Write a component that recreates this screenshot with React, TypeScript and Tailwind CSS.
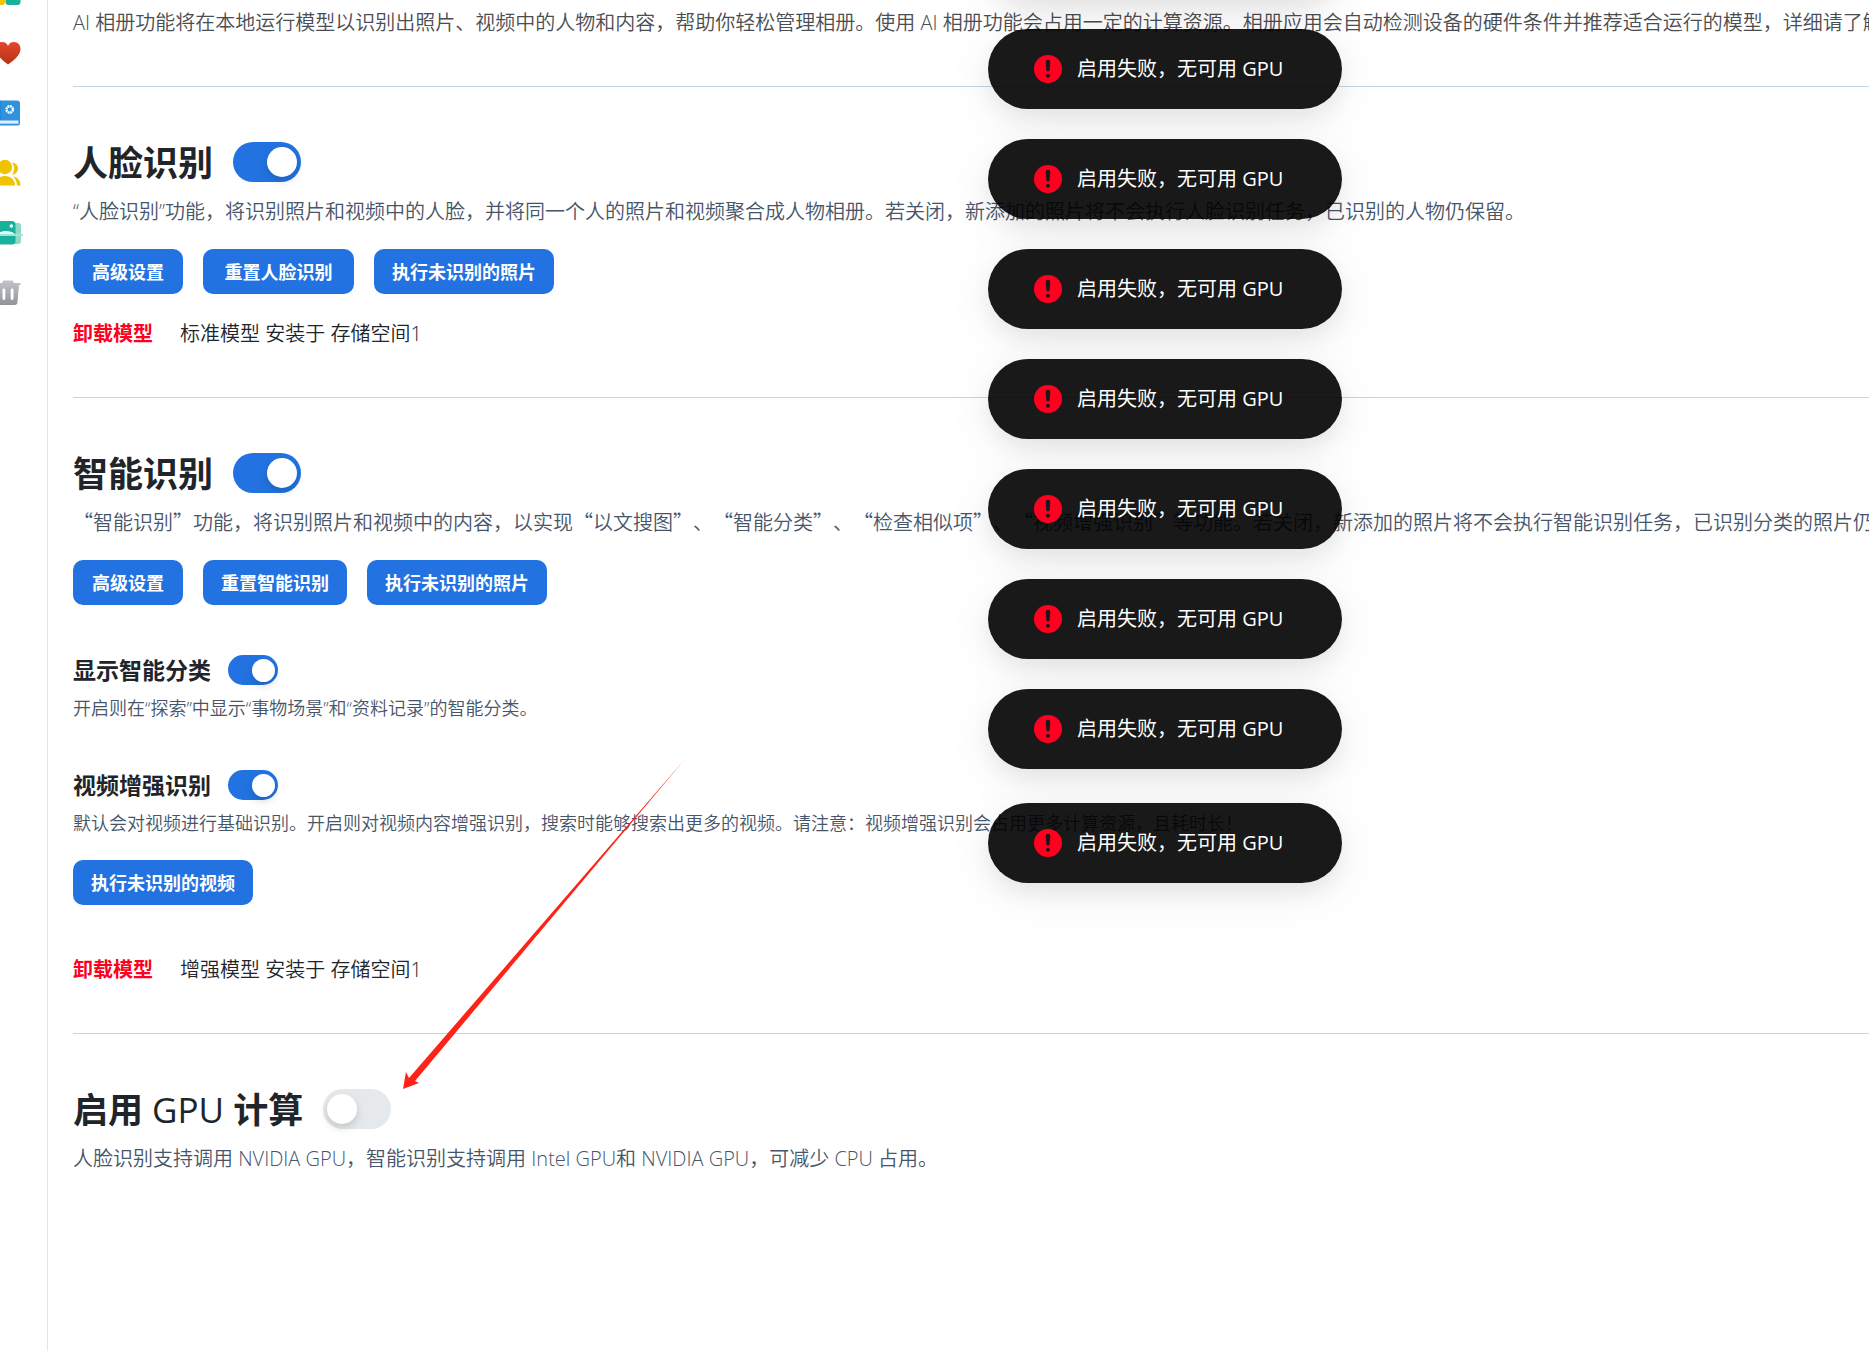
import { useState, type ReactNode } from "react";

const TOASTS = [1, 2, 3, 4, 5, 6, 7, 8];

function HeartIcon() {
  return (
    <svg viewBox="0 0 24 30" className="h-[30px] w-6">
      <defs>
        <linearGradient id="heart" x1="0" y1="0" x2="0" y2="1">
          <stop offset="0" stopColor="#e2482b" />
          <stop offset="1" stopColor="#b93218" />
        </linearGradient>
      </defs>
      <path
        d="M-4 10C-4 6-1 4 2 4c3 0 5 1.500 6 4 1-2.500 3-4 6-4 4 0 6.500 3 6.500 7 0 6-6 11-12.500 15.500C2 22-4 17-4 10z"
        fill="url(#heart)"
      />
    </svg>
  );
}

function AlbumIcon() {
  return (
    <svg viewBox="0 0 24 30" className="h-[30px] w-6">
      <path d="M-4 2.500h21a3 3 0 0 1 3 3V25a2.500 2.500 0 0 1-2.500 2.500H-4z" fill="#2e93dc" />
      <path d="M-4 2.500h4.500v20H-4z" fill="#1c7acb" />
      <path d="M-4 22.500h22.500v3.200H-4z" fill="#e3ecff" />
      <circle cx="9.700" cy="11.500" r="3.200" fill="none" stroke="#fff" strokeWidth="2.400" strokeDasharray="1.900 .6" />
    </svg>
  );
}

function PeopleIcon() {
  return (
    <svg viewBox="0 0 24 30" className="h-[30px] w-6" fill="#efc300">
      <circle cx="5" cy="9" r="7.200" />
      <path d="M-6 27.500c0-6 5-9.500 11-9.500s10 4 10 9.500z" />
      <path d="M12 4.500c3.500.2 6 2.800 6 6s-2.500 6-6 6.300c2.800-3.500 2.800-8.800 0-12.300z" />
      <path d="M13 18.500c4.500.5 7.500 4 7.500 9h-3.500c-.2-3.800-1.500-6.700-4-9z" />
    </svg>
  );
}

function ScanIcon() {
  return (
    <svg viewBox="0 0 24 30" className="h-[30px] w-6">
      <path d="M10 5h8a3 3 0 0 1 3 3v15a3 3 0 0 1-3 3h-8z" fill="#8fd8ca" />
      <path d="M-4 3h16a3.500 3.500 0 0 1 3.500 3.500v16.500a3.500 3.500 0 0 1-3.500 3.500H-4z" fill="#17b29c" />
      <circle cx="11.300" cy="8" r="1.800" fill="#fff" />
      <path d="M-2 16c3-4 13-4 17 0z" fill="#e8faf6" />
      <path d="M-4 16h27v2H-4z" fill="#a6e2d7" />
    </svg>
  );
}

function TrashIcon() {
  return (
    <svg viewBox="0 0 24 30" className="h-[30px] w-6">
      <defs>
        <linearGradient id="trash" x1="0" y1="0" x2="0" y2="1">
          <stop offset="0" stopColor="#c3c5cb" />
          <stop offset="1" stopColor="#929399" />
        </linearGradient>
      </defs>
      <path
        d="M2 4.500 3.500 2.500h9l1.500 2.500h6.500v2h-1.500l-1.500 17a3 3 0 0 1-3 3H-4V5h6zM2.500 12v8.500a1.400 1.400 0 0 0 2.800 0V12a1.400 1.400 0 0 0-2.800 0zm8.200 0v8.500a1.400 1.400 0 0 0 2.800 0V12a1.400 1.400 0 0 0-2.800 0z"
        fillRule="evenodd"
        fill="url(#trash)"
      />
    </svg>
  );
}

const NAV = [
  { label: "收藏", icon: <HeartIcon /> },
  { label: "相册", icon: <AlbumIcon /> },
  { label: "人物", icon: <PeopleIcon /> },
  { label: "扫描", icon: <ScanIcon /> },
  { label: "回收站", icon: <TrashIcon /> },
];

function Sidebar() {
  return (
    <nav className="flex w-12 shrink-0 flex-col overflow-hidden border-r border-[#e3e4ec]">
      <a href="#explore" aria-label="探索" className="block h-[23px]">
        <svg viewBox="0 0 24 23" className="h-[23px] w-6">
          <path d="M-4-6h9v8a3 3 0 0 1-3 3h-6z" fill="#efc300" />
          <path d="M5.500-6h15v8a3 3 0 0 1-3 3h-9a3 3 0 0 1-3-3z" fill="#17b29c" />
        </svg>
      </a>
      {NAV.map((item) => (
        <a key={item.label} href="#album" aria-label={item.label} className="flex h-[60px] items-center">
          {item.icon}
        </a>
      ))}
    </nav>
  );
}

function Toggle({ label, small = false, on = true }: { label: string; small?: boolean; on?: boolean }) {
  const [checked, setChecked] = useState(on);
  const size = small
    ? "h-[30px] w-[50px] before:size-[23px] checked:before:translate-x-5"
    : "h-10 w-[68px] before:size-[30px] checked:before:translate-x-[30px]";

  return (
    <input
      type="checkbox"
      role="switch"
      aria-label={label}
      checked={checked}
      onChange={() => setChecked(!checked)}
      className={`flex shrink-0 cursor-pointer appearance-none items-center rounded-full bg-[#e5e9eb] px-1 before:rounded-full before:bg-white before:shadow-[0_4px_8px_rgba(0,0,0,0.15)] before:content-[''] checked:bg-[#2273e1] ${size}`}
    />
  );
}

function Button({ children, wide = false }: { children: ReactNode; wide?: boolean }) {
  return (
    <button
      className={`h-[45px] rounded-[10px] bg-[#2273e1] px-[18px] text-lg font-bold text-white ${wide ? "min-w-[151px]" : "min-w-[110px]"}`}
    >
      {children}
    </button>
  );
}

function Title({ children }: { children: ReactNode }) {
  return <h2 className="h-10 text-[35px] leading-[42px] font-bold text-[#212529]">{children}</h2>;
}

function SubTitle({ children }: { children: ReactNode }) {
  return <h3 className="text-[23px] leading-[30px] font-bold text-[#212529]">{children}</h3>;
}

function ModelStatus({ children }: { children: ReactNode }) {
  return (
    <div className="flex gap-[27px] leading-[30px]">
      <button className="font-bold text-[#ff0020]">卸载模型</button>
      <span className="font-[350] text-[#212529]">{children}</span>
    </div>
  );
}

function Toast() {
  return (
    <div
      role="alert"
      className="flex h-20 min-w-[354px] items-center gap-3.5 rounded-full bg-black/90 px-[45px] text-white shadow-[0_10px_20px_rgba(0,0,0,0.06),0_10px_50px_rgba(0,0,0,0.07)] last:mt-1"
    >
      <svg viewBox="0 0 30 30" className="size-[30px]">
        <circle cx="15" cy="15" r="14" fill="#ff0020" />
        <path d="M12.700 8a2.300 2.300 0 0 1 4.600 0l-.6 7.800a1.700 1.700 0 0 1-3.400 0z" fill="#1a1a1a" />
        <circle cx="15" cy="21.700" r="2" fill="#1a1a1a" />
      </svg>
      <span>启用失败，无可用 GPU</span>
    </div>
  );
}

export default function App() {
  return (
    <div className="relative flex min-h-screen overflow-hidden bg-white font-['Open_Sans','Noto_Sans_CJK_SC',sans-serif] text-xl [text-spacing-trim:space-all]">
      <Sidebar />

      <main className="min-w-0 flex-1 pt-2 pl-[25px] whitespace-nowrap">
        <p className="pb-12 leading-[30px] font-[350] text-[#4a4d52]">
          AI 相册功能将在本地运行模型以识别出照片、视频中的人物和内容，帮助你轻松管理相册。使用 AI
          相册功能会占用一定的计算资源。相册应用会自动检测设备的硬件条件并推荐适合运行的模型，详细请了解
        </p>

        {/* Face recognition */}
        <section className="border-t border-[#c8d3e0] pt-[55px] pb-12">
          <div className="flex items-center gap-5">
            <Title>人脸识别</Title>
            <Toggle label="人脸识别" />
          </div>
          <p className="mt-[15px] leading-[30px] font-[350] text-[#475569]">
            “人脸识别”功能，将识别照片和视频中的人脸，并将同一个人的照片和视频聚合成人物相册。若关闭，新添加的照片将不会执行人脸识别任务，已识别的人物仍保留。
          </p>
          <div className="mt-[22px] mb-[25px] flex gap-5">
            <Button>高级设置</Button>
            <Button wide>重置人脸识别</Button>
            <Button>执行未识别的照片</Button>
          </div>
          <ModelStatus>标准模型 安装于 存储空间1</ModelStatus>
        </section>

        {/* Smart recognition */}
        <section className="border-t border-[#c8d3e0] pt-[55px] pb-12">
          <div className="flex items-center gap-5">
            <Title>智能识别</Title>
            <Toggle label="智能识别" />
          </div>
          <p className="mt-3.5 font-['Noto_Sans_CJK_SC',sans-serif] leading-[30px] font-[350] text-[#475569]">
            “智能识别”功能，将识别照片和视频中的内容，以实现“以文搜图”、“智能分类”、“检查相似项”、“视频增强识别”等功能。若关闭，新添加的照片将不会执行智能识别任务，已识别分类的照片仍保留。
          </p>
          <div className="mt-[23px] flex gap-5">
            <Button>高级设置</Button>
            <Button>重置智能识别</Button>
            <Button>执行未识别的照片</Button>
          </div>

          <div className="mt-[50px] flex items-center gap-[17px]">
            <SubTitle>显示智能分类</SubTitle>
            <Toggle label="显示智能分类" small />
          </div>
          <p className="mt-2 text-lg leading-[30px] font-[350] text-[#475569]">
            开启则在“探索”中显示“事物场景”和“资料记录”的智能分类。
          </p>

          <div className="mt-[47px] flex items-center gap-[17px]">
            <SubTitle>视频增强识别</SubTitle>
            <Toggle label="视频增强识别" small />
          </div>
          <p className="mt-2 mb-[22px] text-lg leading-[30px] font-[350] text-[#475569]">
            默认会对视频进行基础识别。开启则对视频内容增强识别，搜索时能够搜索出更多的视频。请注意：视频增强识别会占用更多计算资源，且耗时长！
          </p>
          <Button>执行未识别的视频</Button>

          <div className="mt-[50px]">
            <ModelStatus>增强模型 安装于 存储空间1</ModelStatus>
          </div>
        </section>

        {/* GPU */}
        <section className="border-t border-[#c8d3e0] pt-[55px] pb-12">
          <div className="flex items-center gap-5">
            <Title>
              启用 <span className="font-medium">GPU</span> 计算
            </Title>
            <Toggle label="启用 GPU 计算" on={false} />
          </div>
          <p className="mt-[15px] leading-[30px] font-[350] text-[#475569]">
            人脸识别支持调用 NVIDIA GPU，智能识别支持调用 Intel GPU和 NVIDIA GPU，可减少 CPU 占用。
          </p>
        </section>
      </main>

      {/* Toasts, the topmost one has already slid out of view */}
      <div className="absolute top-[-81px] left-[988px] flex flex-col gap-[30px]">
        <Toast />
        {TOASTS.map((id) => (
          <Toast key={id} />
        ))}
      </div>

      <svg viewBox="0 0 290 335" className="pointer-events-none absolute top-[758px] left-[398px] h-[335px] w-[290px]">
        <path d="M287 1 11 320 8 314 5 331 21 325 17 323z" fill="#ff2317" />
      </svg>
    </div>
  );
}
